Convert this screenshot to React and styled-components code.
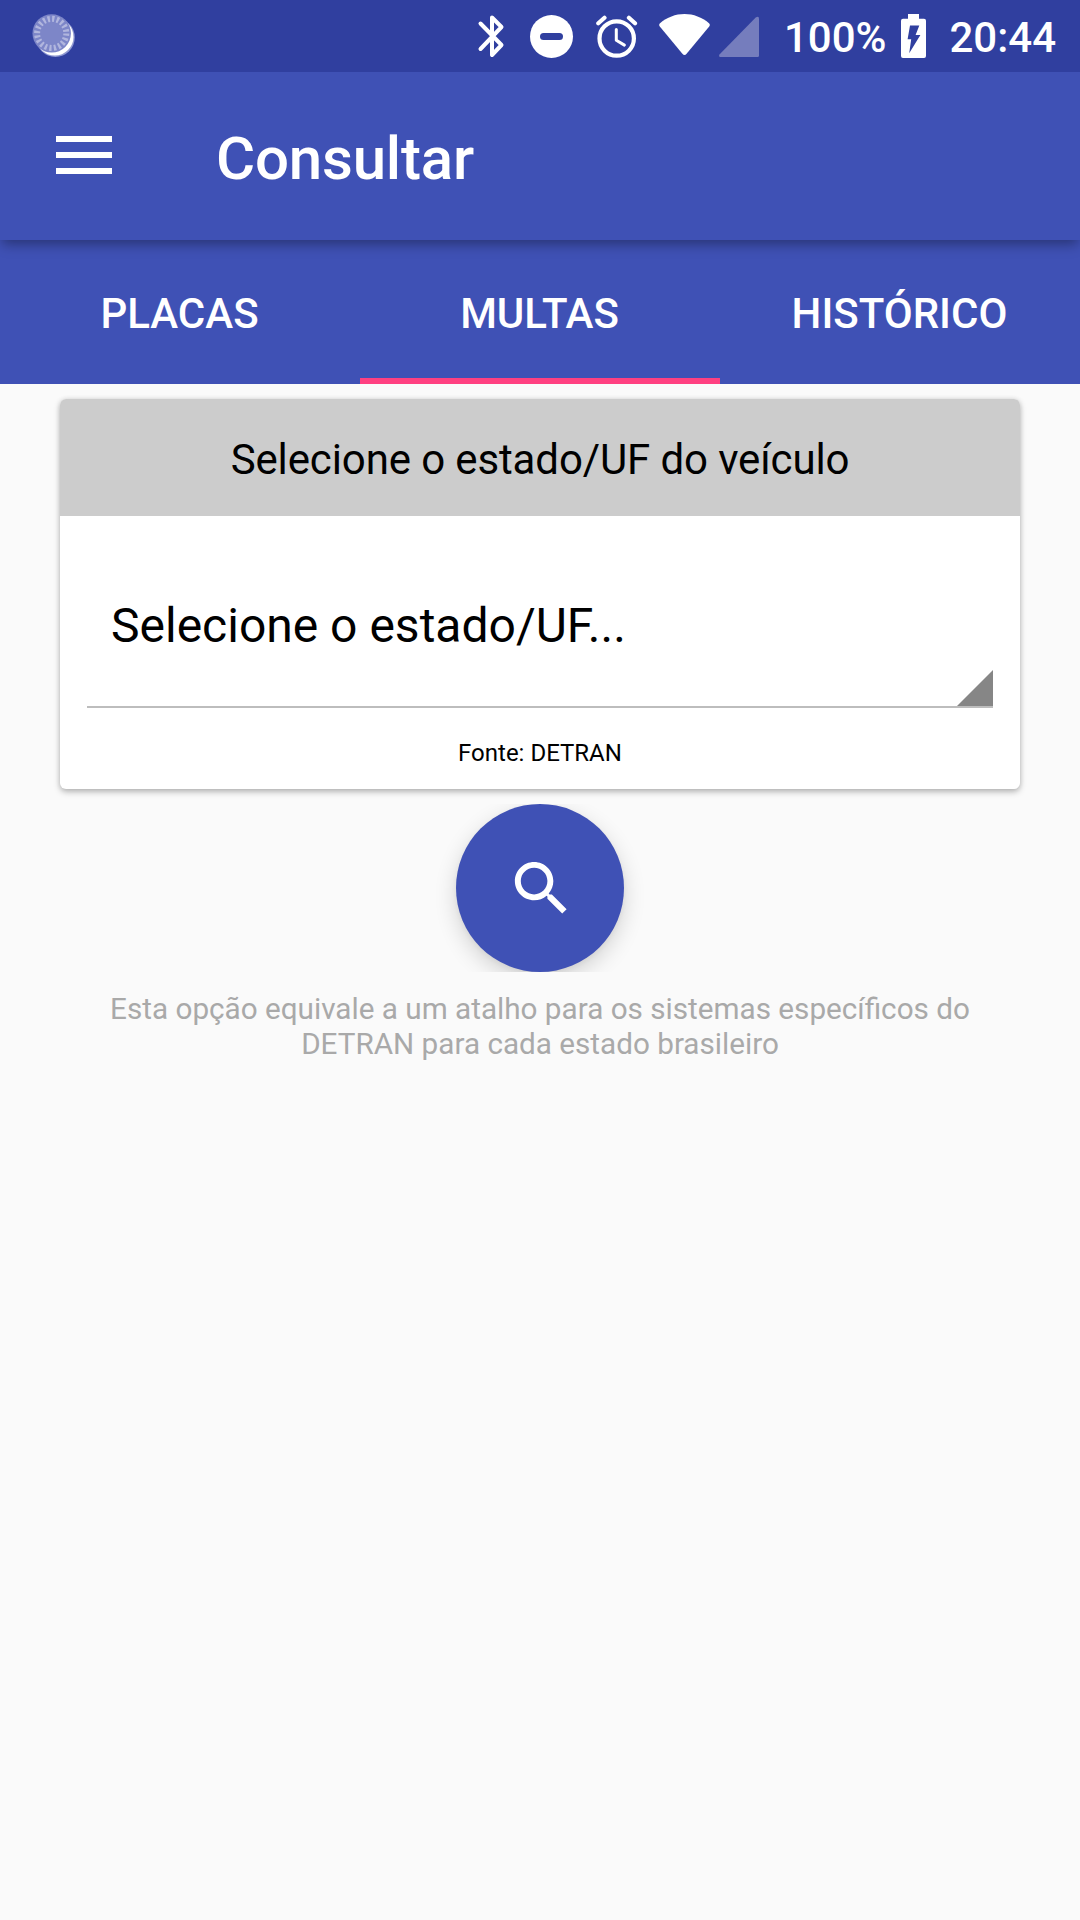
import React, { useState } from "react";
import styled, { createGlobalStyle } from "styled-components";

const tabs = ["Placas", "Multas", "Histórico"];

const Spinner = () => (
  <StatusIcon width="48" height="72" viewBox="0 0 48 72">
    <circle cx="23.4" cy="37.5" r="19.4" fill="#8f98d2" />
    <circle cx="22.8" cy="36.9" r="18.7" fill="#fff" />
    <circle cx="19.7" cy="33.4" r="19.2" fill="#7d86c8" />
    <circle
      cx="19.7"
      cy="33.4"
      r="14.6"
      fill="none"
      stroke="#b1b6de"
      strokeWidth="6"
      strokeDasharray="2.3 2.287"
    />
  </StatusIcon>
);

const BluetoothIcon = () => (
  <StatusIcon width="30" height="72" viewBox="0 0 30 72">
    <path
      d="M3.5 23.5L24.5 45L15 55V17.5L24.5 27L3.5 49"
      fill="none"
      stroke="#fff"
      strokeWidth="4"
      strokeLinejoin="round"
      strokeLinecap="round"
    />
  </StatusIcon>
);

const DoNotDisturbIcon = () => (
  <StatusIcon left="23" width="44" height="72" viewBox="0 0 44 72">
    <circle cx="21.5" cy="36.5" r="21.5" fill="#fff" />
    <rect x="10" y="33" width="23" height="7" rx="3.5" fill="#303f9f" />
  </StatusIcon>
);

const AlarmIcon = () => (
  <StatusIcon left="22" width="42" height="72" viewBox="0 0 42 72">
    <g fill="none" stroke="#fff" strokeLinecap="round" strokeLinejoin="round">
      <circle cx="20.7" cy="38.5" r="17.2" strokeWidth="4.2" />
      <path d="M20.3 29.5V40.3L28.4 45.1" strokeWidth="3" />
      <path d="M2.3 23.3L8.5 17.8M32.9 17.8L39 23.3" strokeWidth="4.2" />
    </g>
  </StatusIcon>
);

const WifiIcon = () => (
  <StatusIcon left="21" width="52" height="72" viewBox="0 0 52 72">
    <path
      d="M1 23.2C8 17.3 16.5 14 25.5 14C34.5 14 43 17.3 50 23.2Q51.5 24.8 50.2 26.4L27.6 53.8Q25.5 56.2 23.4 53.8L.8 26.4Q-.5 24.8 1 23.2Z"
      fill="#fff"
    />
  </StatusIcon>
);

const SignalIcon = () => (
  <StatusIcon left="8" width="40" height="72" viewBox="0 0 40 72">
    <path
      d="M36.7 17.4Q40 15.4 40 18.7V55.5Q40 57 38.5 57H1.6Q-1 57 .7 54.3Z"
      fill="#757dbd"
    />
  </StatusIcon>
);

const BatteryIcon = () => (
  <StatusIcon left="15" width="25" height="72" viewBox="0 0 25 72">
    <path
      d="M7 14H18V18.8H23Q25 18.8 25 20.8V56Q25 58 23 58H2Q0 58 0 56V20.8Q0 18.8 2 18.8H7Z"
      fill="#fff"
    />
    <path d="M9 25.5H18.3L14.6 35H19.4L8.2 53.2L10.2 39.2H6.6Z" fill="#303f9f" />
  </StatusIcon>
);

const MenuIcon = () => (
  <svg width="56" height="38" viewBox="0 0 56 38" fill="#fff">
    <rect width="56" height="6" />
    <rect y="16" width="56" height="6" />
    <rect y="32" width="56" height="6" />
  </svg>
);

const SearchIcon = () => (
  <svg width="71" height="71" viewBox="0 0 24 24" fill="#fff">
    <path d="M15.5 14h-.79l-.28-.27C15.41 12.59 16 11.11 16 9.5 16 5.91 13.09 3 9.5 3S3 5.91 3 9.5 5.91 16 9.5 16c1.61 0 3.09-.59 4.23-1.57l.27.28v.79l5 4.99L20.49 19l-4.99-5zm-6 0C7.01 14 5 11.99 5 9.5S7.01 5 9.5 5 14 7.01 14 9.5 11.99 14 9.5 14z" />
  </svg>
);

const App = () => {
  const [active, setActive] = useState("Multas");
  return (
    <Screen>
      <GlobalStyle />
      <StatusBar>
        <Notifications>
          <Spinner />
        </Notifications>
        <BluetoothIcon />
        <DoNotDisturbIcon />
        <AlarmIcon />
        <WifiIcon />
        <SignalIcon />
        <StatusText left="25">100%</StatusText>
        <BatteryIcon />
        <StatusText left="23">20:44</StatusText>
      </StatusBar>
      <AppBar>
        <MenuButton aria-label="Menu">
          <MenuIcon />
        </MenuButton>
        <Title>Consultar</Title>
      </AppBar>
      <Tabs>
        {tabs.map((tab) => (
          <Tab key={tab} $active={tab === active} onClick={() => setActive(tab)}>
            {tab}
          </Tab>
        ))}
      </Tabs>
      <Content>
        <Card>
          <CardHeader>Selecione o estado/UF do veículo</CardHeader>
          <CardBody>
            <Select>
              Selecione o estado/UF...
              <Corner />
            </Select>
            <Source>Fonte: DETRAN</Source>
          </CardBody>
        </Card>
        <FabCont>
          <Fab aria-label="Consultar">
            <SearchIcon />
          </Fab>
        </FabCont>
        <Hint>
          Esta opção equivale a um atalho para os sistemas específicos do DETRAN
          para cada estado brasileiro
        </Hint>
      </Content>
    </Screen>
  );
};

const GlobalStyle = createGlobalStyle`
  * {
    box-sizing: border-box;
  }
  body {
    margin: 0;
    background: #fafafa;
    font-family: Roboto, "Liberation Sans", sans-serif;
  }
  button {
    border: 0;
    padding: 0;
    font-family: inherit;
    cursor: pointer;
  }
`;
const Screen = styled.div`
  width: 100%;
  height: 1920px;
  display: flex;
  flex-direction: column;
  overflow: hidden;
  background: #fafafa;
`;
const StatusBar = styled.div`
  position: relative;
  z-index: 2;
  height: 72px;
  flex-shrink: 0;
  display: flex;
  align-items: center;
  padding: 0 24px 0 32px;
  background: #303f9f;
`;
const Notifications = styled.div`
  flex: 1;
  display: flex;
`;
const StatusIcon = styled.svg.withConfig({
  shouldForwardProp: (prop) => prop !== "left",
})`
  display: block;
  flex-shrink: 0;
  margin-left: ${(props) => props.left || 0}px;
`;
const StatusText = styled.span.withConfig({
  shouldForwardProp: (prop) => prop !== "left",
})`
  margin-left: ${(props) => props.left}px;
  padding-top: 3px;
  color: #fff;
  font-size: 42px;
  font-weight: 500;
  white-space: nowrap;
`;
const AppBar = styled.header`
  position: relative;
  z-index: 1;
  height: 168px;
  flex-shrink: 0;
  display: flex;
  align-items: center;
  padding-left: 56px;
  background: #3f51b5;
  box-shadow: 0 6px 12px -2px rgba(0, 0, 0, 0.36);
`;
const MenuButton = styled.button`
  display: flex;
  margin-bottom: 2px;
  background: transparent;
`;
const Title = styled.h1`
  margin: 0 0 0 104px;
  padding-top: 5px;
  color: #fff;
  font-size: 60px;
  font-weight: 500;
  letter-spacing: -0.2px;
`;
const Tabs = styled.nav`
  height: 144px;
  flex-shrink: 0;
  display: grid;
  grid-template-columns: repeat(3, 1fr);
  background: #3f51b5;
`;
const Tab = styled.button`
  padding: 9px 1px 0 0;
  background: transparent;
  border-bottom: 6px solid ${(props) => (props.$active ? "#ff4081" : "transparent")};
  color: #fff;
  font-size: 42px;
  font-weight: 500;
  text-transform: uppercase;
`;
const Content = styled.main`
  display: flex;
  flex-direction: column;
  padding: 15px 60px 0;
`;
const Card = styled.section`
  height: 390px;
  display: flex;
  flex-direction: column;
  border-radius: 6px;
  background: #fff;
  box-shadow: 0 3px 6px rgba(0, 0, 0, 0.26), 0 0 5px rgba(0, 0, 0, 0.1);
`;
const CardHeader = styled.h2`
  height: 117px;
  margin: 0;
  padding-top: 4px;
  display: flex;
  align-items: center;
  justify-content: center;
  border-radius: 6px 6px 0 0;
  background: #ccc;
  color: #000;
  font-size: 42px;
  font-weight: 400;
  letter-spacing: -0.12px;
`;
const CardBody = styled.div`
  padding: 27px 27px 0;
`;
const Select = styled.div`
  position: relative;
  height: 165px;
  padding: 2px 0 0 24px;
  display: flex;
  align-items: center;
  border-bottom: 2px solid #bdbdbd;
  color: #000;
  font-size: 48px;
`;
const Corner = styled.span`
  position: absolute;
  right: 0;
  bottom: 0;
  width: 36px;
  height: 36px;
  background: #868686;
  clip-path: polygon(100% 0, 100% 100%, 0 100%);
`;
const Source = styled.p`
  margin: 31px 0 0;
  color: #000;
  font-size: 24px;
  line-height: 28px;
  text-align: center;
`;
/* clips the button shadow at its top and bottom edges */
const FabCont = styled.div`
  height: 168px;
  margin-top: 15px;
  display: flex;
  justify-content: center;
  overflow: hidden;
`;
const Fab = styled.button`
  width: 168px;
  height: 168px;
  display: flex;
  align-items: center;
  justify-content: center;
  padding: 1px 0 0 2px;
  border-radius: 50%;
  background: #3f51b5;
  box-shadow: 0 8px 22px rgba(0, 0, 0, 0.16), 0 2px 5px rgba(0, 0, 0, 0.05);
`;
const Hint = styled.p`
  margin: 19px 30px 0;
  color: #a9a9a9;
  font-size: 29.68px;
  line-height: 35px;
  text-align: center;
`;

export default App;
